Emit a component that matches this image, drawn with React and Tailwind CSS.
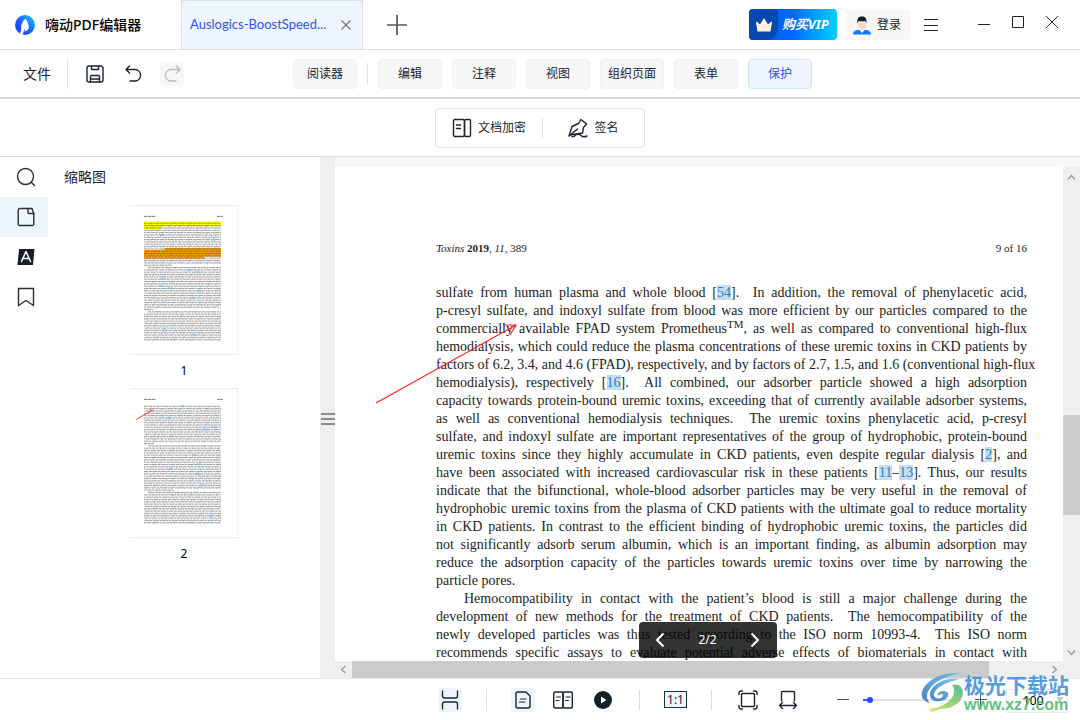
import { useState } from "react";

const menus = ["编辑", "注释", "视图", "组织页面", "表单", "保护"];

const firstParagraph = [
    "sulfate from human plasma and whole blood [54].\u00a0 In addition, the removal of phenylacetic acid,",
    "p-cresyl sulfate, and indoxyl sulfate from blood was more efficient by our particles compared to the",
    "commercially available FPAD system Prometheus^TM^, as well as compared to conventional high-flux",
    "hemodialysis, which could reduce the plasma concentrations of these uremic toxins in CKD patients by",
    "factors of 6.2, 3.4, and 4.6 (FPAD), respectively, and by factors of 2.7, 1.5, and 1.6 (conventional high-flux",
    "hemodialysis), respectively [16].\u00a0 All combined, our adsorber particle showed a high adsorption",
    "capacity towards protein-bound uremic toxins, exceeding that of currently available adsorber systems,",
    "as well as conventional hemodialysis techniques.\u00a0 The uremic toxins phenylacetic acid, p-cresyl",
    "sulfate, and indoxyl sulfate are important representatives of the group of hydrophobic, protein-bound",
    "uremic toxins since they highly accumulate in CKD patients, even despite regular dialysis [2], and",
    "have been associated with increased cardiovascular risk in these patients [11–13]. Thus, our results",
    "indicate that the bifunctional, whole-blood adsorber particles may be very useful in the removal of",
    "hydrophobic uremic toxins from the plasma of CKD patients with the ultimate goal to reduce mortality",
    "in CKD patients. In contrast to the efficient binding of hydrophobic uremic toxins, the particles did",
    "not significantly adsorb serum albumin, which is an important finding, as albumin adsorption may",
    "reduce the adsorption capacity of the particles towards uremic toxins over time by narrowing the",
];

const secondParagraph = [
    "Hemocompatibility in contact with the patient’s blood is still a major challenge during the",
    "development of new methods for the treatment of CKD patients.\u00a0 The hemocompatibility of the",
    "newly developed particles was thus tested according to the ISO norm 10993-4.\u00a0 This ISO norm",
    "recommends specific assays to evaluate potential adverse effects of biomaterials in contact with",
];

const Icon = ({ size = 20, children, className = "" }) => (
    <svg
        width={size}
        height={size}
        viewBox="0 0 20 20"
        fill="none"
        stroke="currentColor"
        strokeWidth="1.4"
        strokeLinecap="round"
        strokeLinejoin="round"
        aria-hidden="true"
        className={`shrink-0 ${className}`}
    >
        {children}
    </svg>
);

const Cite = ({ children }) => (
    <a href="#refs" className="bg-[#c4deef] text-[#1f83c4]">{children}</a>
);

// Turns [12], [11–13] and ^TM^ into links and superscripts
const renderLine = (line) =>
    line.split(/(\[[\d–]+\]|\^TM\^)/).map((part, i) => {
        if (part === "^TM^") {
            return <sup key={i} className="text-[11px] leading-none">TM</sup>;
        }
        if (/^\[[\d–]+\]$/.test(part)) {
            const [from, to] = part.slice(1, -1).split("–");
            return (
                <span key={i}>
                    [<Cite>{from}</Cite>{to && <>–<Cite>{to}</Cite></>}]
                </span>
            );
        }
        return part;
    });

const Line = ({ children, indent }) => (
    <div className={`whitespace-nowrap text-justify [text-align-last:justify] ${indent ? "pl-7" : ""}`}>
        {renderLine(children)}
    </div>
);

const dashes = ["3 .7 5 .6 2 .7 4 .5", "5 .6 2 .6 6 .7 3 .6", "2 .6 4 .7 3 .5 7 .6"];

// shorts: line index -> length of the last line of a paragraph, indents: first lines
const Thumbnail = ({ shorts, indents, marks, cites, arrow }) => (
    <svg width="108" height="150" viewBox="0 0 108 150" className="border border-[#ececec] border-l-0 bg-white" aria-hidden="true">
        <path d="M14 10.500h12M88 10.500h6" stroke="#666" strokeWidth=".9" strokeDasharray="3 .5 4 .5" />
        {marks}
        {Array.from({ length: 51 }, (_, i) => {
            const start = indents.includes(i) ? 18 : 14;
            const end = shorts[i] ? 14 + shorts[i] : 92;
            const y = 17.5 + i * 2.36;
            return (
                <g key={i}>
                    <path d={`M${start} ${y}H${end}`} stroke="#333" strokeOpacity=".5" strokeWidth=".9" strokeDasharray={dashes[i % 3]} strokeDashoffset={i * 3} />
                    <path d={`M${start} ${y + 0.8}H${end}`} stroke="#333" strokeOpacity=".3" strokeWidth=".8" strokeDasharray="1.500 2.500 .8 1.700" strokeDashoffset={i * 2} />
                </g>
            );
        })}
        {cites.map(([x, row]) => (
            <path key={`${x}-${row}`} d={`M${x} ${17.5 + row * 2.36}h4`} stroke="#8cc3e6" strokeWidth="1.800" />
        ))}
        {arrow && <path d="M6 31 22 21.500M20 21.500h3" stroke="#f33" strokeWidth="1" />}
    </svg>
);

const TitleBar = () => (
    <header className="flex h-[50px] shrink-0 items-center border-b border-[#dedede]">
        <div className="flex w-[181px] shrink-0 items-center gap-2.5 pl-[15px]">
            <svg width="20" height="20" viewBox="0 0 20 20" aria-hidden="true">
                <defs>
                    <linearGradient id="logo" x1="0" y1="1" x2="1" y2="0">
                        <stop offset="0" stopColor="#1732ff" />
                        <stop offset=".5" stopColor="#1c64ff" />
                        <stop offset="1" stopColor="#25d4ff" />
                    </linearGradient>
                </defs>
                <circle cx="10" cy="10" r="10" fill="url(#logo)" />
                <path d="M10.500 3.500C7 7 5.800 10.500 6.200 13c.2 1.600-.4 3.600-1.200 5.600l3 1c.2-2 .8-4 2-6 0 1.200-.3 2-.6 3 3-.4 4.500-2 4.400-4.600C13.700 9 12 6 10.500 3.500Z" fill="#fff" />
            </svg>
            <h1 className="whitespace-nowrap text-sm font-medium text-black">嗨动PDF编辑器</h1>
        </div>
        <div className="flex h-full w-[182px] shrink-0 items-center justify-between border border-b-0 border-[#dcdfe6] bg-[#eef5ff] pr-2.5 pl-2">
            <span className="whitespace-nowrap font-['Lato',sans-serif] text-[13px] text-[#2f54eb]">Auslogics-BoostSpeed...</span>
            <button aria-label="关闭标签" className="text-[#777]">
                <svg width="12" height="12" viewBox="0 0 12 12" stroke="currentColor" strokeWidth="1.200"><path d="m1.500 1.500 9 9m0-9-9 9" /></svg>
            </button>
        </div>
        <button aria-label="新建标签" className="ml-6 text-[#555]">
            <svg width="20" height="20" viewBox="0 0 20 20" stroke="currentColor" strokeWidth="1.700"><path d="M10 0v20M0 10h20" /></svg>
        </button>

        <div className="ml-auto flex items-center pr-[22px]">
            <button className="flex h-[31px] w-[88px] items-center overflow-hidden rounded bg-linear-to-r from-[#0758d6] via-[#0066ff] to-[#00d0ff]">
                <span className="flex h-full w-[29px] items-center justify-center rounded-br-xl bg-[#0748ae]">
                    <svg width="18" height="14" viewBox="0 0 18 14" aria-hidden="true">
                        <path d="M2.500 13.500 1 4.500c0-1 1-1 1.300-.4L5 6.500 8 1.500c.5-1.200 1.500-1.200 2 0l3 5 2.700-2.400c.6-.6 1.500-.4 1.300.4l-1.500 9Z" fill="#fff3df" />
                    </svg>
                </span>
                <span className="pl-1 whitespace-nowrap text-[13px] font-bold italic text-white">购买VIP</span>
            </button>
            <button className="ml-[10px] flex h-[30px] w-16 items-center gap-1.5 rounded bg-[#f7f7f7] pl-1.5 text-xs text-[#1b2430]">
                <svg width="18" height="20" viewBox="0 0 18 20" aria-hidden="true">
                    <path d="M0 19.500c0-3 2.500-4.500 6-4.700h6c3.500.2 6 1.700 6 4.700Z" fill="#1677ff" />
                    <path d="M6 14.500 9 18l3-3.500-1-2H7Z" fill="#fff" />
                    <path d="M5 6h8v4.500c0 3-1.800 4.500-4 4.500s-4-1.500-4-4.500Z" fill="#fcd9cb" />
                    <path d="M4.500 8.500C4 4 5 1.500 8.500 1.500c3.800-.4 5.500 2 5 7l-1-2.500c-2 .5-5 .3-7 0Z" fill="#14202b" />
                </svg>
                登录
            </button>
            <button aria-label="菜单" className="ml-[13px] text-[#1b2430]">
                <svg width="14" height="12" viewBox="0 0 14 12" stroke="currentColor" strokeWidth="1"><path d="M0 .5h14M0 6.500h14M0 11.500h14" /></svg>
            </button>
            <button aria-label="最小化" className="ml-10 text-[#222]">
                <svg width="12" height="12" viewBox="0 0 12 12" stroke="currentColor"><path d="M0 5.500h12" /></svg>
            </button>
            <button aria-label="最大化" className="mb-1.5 ml-[22px] text-[#222]">
                <svg width="12" height="12" viewBox="0 0 12 12" fill="none" stroke="currentColor"><path d="M.5.500h11v11H.500z" /></svg>
            </button>
            <button aria-label="关闭" className="mb-1.5 ml-[22px] text-[#222]">
                <svg width="12" height="12" viewBox="0 0 12 12" stroke="currentColor"><path d="m0 0 12 12M12 0 0 12" /></svg>
            </button>
        </div>
    </header>
);

const Toolbar = () => (
    <nav className="flex h-12 shrink-0 items-center border-b border-[#cfcfcf] pt-px pl-[23px] text-[#1b2430]">
        <button className="whitespace-nowrap text-sm">文件</button>
        <div className="ml-4 h-[30px] w-px bg-[#e2e2e2]" />
        <button aria-label="保存" className="ml-[17px]">
            <Icon>
                <path d="M4 2h12.500L18 3.500V16a2 2 0 0 1-2 2H4a2 2 0 0 1-2-2V4a2 2 0 0 1 2-2Z" />
                <path d="M6.500 2v3.500h7V2M5.500 18v-5.500a1 1 0 0 1 1-1h7a1 1 0 0 1 1 1V18M5.500 15h9" />
            </Icon>
        </button>
        <button aria-label="撤销" className="ml-[19px]">
            <Icon><path d="M5.500 2 2 5.500 5.500 9M2 5.500h9.500a5.800 5.800 0 0 1 0 11.500H6" /></Icon>
        </button>
        <button aria-label="重做" disabled className="ml-4 flex size-6 items-center justify-center rounded-sm bg-[#f7f7f7] text-[#bbb]">
            <Icon><path d="M14.500 2 18 5.500 14.500 9M18 5.500H8.500a5.800 5.800 0 0 0 0 11.500H14" /></Icon>
        </button>

        <div className="ml-[109px] flex items-center gap-2.5 text-xs">
            <button className="h-[30px] w-16 rounded border border-[#f1f1f1] bg-[#f7f7f7]">阅读器</button>
            <div className="h-[22px] w-px bg-[#e2e2e2]" />
            {menus.map((menu) => (
                <button
                    key={menu}
                    className={`h-[30px] w-16 whitespace-nowrap rounded border ${menu === "保护"
                        ? "border-[#cfe3fb] bg-[#eef5ff] text-[#2f54eb]"
                        : "border-[#f1f1f1] bg-[#f7f7f7]"}`}
                >
                    {menu}
                </button>
            ))}
        </div>
    </nav>
);

const ProtectBar = () => (
    <div className="flex h-[59px] shrink-0 items-center justify-center border-y border-t-[#e4e4e4] border-b-[#dedede]">
        <div className="flex h-10 w-[210px] items-center rounded border border-[#e2e2e2] text-xs text-[#1b2430]">
            <button className="flex w-[106px] items-center justify-center gap-1.5">
                <Icon>
                    <rect x="1.500" y="1.500" width="11" height="17" rx="1.500" />
                    <rect x="12.500" y="1.500" width="6" height="17" rx="1.500" />
                    <path d="M4.500 7h4M4.500 10.500h4" />
                </Icon>
                文档加密
            </button>
            <div className="h-5 w-px bg-[#dcdcdc]" />
            <button className="flex flex-1 items-center justify-center gap-1.5">
                <Icon>
                    <path d="M1 18 4 8.500 10.500 5.500 13 1.500 18.500 6l-3 3.500-1 5.500L1.500 17" />
                    <path d="m1.500 17.500 8-6.500M4 18.500h2c2-2.500 5-3 7-1 1.500 1.500 4 1.500 6 .5" />
                </Icon>
                签名
            </button>
        </div>
    </div>
);

const SideRail = () => (
    <div className="flex w-12 shrink-0 flex-col text-[#2b2f33]">
        <button aria-label="搜索" className="flex h-10 items-center justify-center pl-1">
            <Icon><circle cx="9.500" cy="9.500" r="8" /><path d="m15.500 15.500 3 3" /></Icon>
        </button>
        <button aria-label="缩略图" className="flex h-10 items-center justify-center bg-[#eef5ff] pl-1">
            <Icon>
                <path d="M12 1.500H4a1.800 1.800 0 0 0-1.800 1.800v13.400A1.800 1.800 0 0 0 4 18.500h12a1.800 1.800 0 0 0 1.800-1.800V6.500L16 1.500Z" />
                <path d="M12 1.500v4a1 1 0 0 0 1 1h4.800" />
            </Icon>
        </button>
        <button aria-label="批注" className="flex h-10 items-center justify-center pl-1">
            <Icon>
                <path d="M3 2h15.500L17 18H1.500Z" fill="#15202b" stroke="none" />
                <path d="M5.500 14.500 10 4.500l4.500 10M7 11.500h6" stroke="#fff" strokeWidth="1.500" />
            </Icon>
        </button>
        <button aria-label="书签" className="flex h-10 items-center justify-center pl-1">
            <Icon><path d="M2.500 1.500h15v17L10 13.500l-7.500 5Z" strokeLinejoin="miter" /></Icon>
        </button>
    </div>
);

const ThumbPanel = () => (
    <aside className="flex w-[272px] shrink-0 flex-col">
        <h2 className="h-12 pl-4 text-sm leading-10 text-[#23233f]">缩略图</h2>
        <div className="flex flex-col items-center text-xs text-black">
            <button className="flex h-[183px] flex-col items-center gap-2">
                <Thumbnail
                    indents={[19, 38]}
                    shorts={{ 18: 28, 37: 9 }}
                    cites={[[30, 5], [82, 7], [58, 20], [66, 21], [32, 24], [29, 27], [38, 28], [68, 29], [62, 32], [33, 46], [63, 48]]}
                    marks={
                        <>
                            <path d="M14 15.500h78v5H32v3H14Z" fill="#ffff1a" />
                            <path d="M35 42.500h57v9H75v2H14v-9h21Z" fill="#ffa01a" />
                        </>
                    }
                />
                1
            </button>
            <button className="flex h-[183px] flex-col items-center gap-2">
                <Thumbnail
                    indents={[17, 37]}
                    shorts={{ 16: 10, 36: 30 }}
                    cites={[[51, 0], [37, 5], [83, 9], [74, 10], [63, 21], [68, 25], [39, 27], [66, 29], [71, 34], [80, 47]]}
                    arrow
                />
                2
            </button>
        </div>
    </aside>
);

const Chevron = ({ d }) => (
    <svg width="9" height="9" viewBox="0 0 9 9" fill="none" stroke="#999" strokeWidth="1.300" aria-hidden="true"><path d={d} /></svg>
);

const Viewer = () => (
    <main className="relative flex min-w-0 flex-1 flex-col bg-[#f7f7f7] pt-2.5">
        <div className="flex min-h-0 flex-1">
            <article className="relative min-w-0 flex-1 overflow-hidden bg-white pt-[72px] pr-9 pl-[101px] font-['Liberation_Serif',serif] text-sm leading-[18px] text-[#1c1c1c]">
                <div className="mb-[27px] flex justify-between text-[11px]">
                    <span><i>Toxins</i> <b>2019</b>, <i>11</i>, 389</span>
                    <span>9 of 16</span>
                </div>
                {firstParagraph.map((line) => <Line key={line}>{line}</Line>)}
                <div>particle pores.</div>
                {secondParagraph.map((line, i) => <Line key={line} indent={i === 0}>{line}</Line>)}
                <svg width="146" height="84" viewBox="0 0 146 84" fill="none" stroke="#ff2020" strokeWidth="1.200" className="absolute top-[155px] left-10" aria-hidden="true">
                    <path d="m1 81 140-78M128 3h13l-6 10" />
                </svg>
            </article>
            <div className="flex w-[17px] shrink-0 flex-col items-center bg-[#efefef] pt-1.5 pb-1">
                <Chevron d="m1 6.500 3.500-4L8 6.500" />
                <div className="mt-[233px] h-[100px] w-full bg-[#cdcdcd]" />
                <div className="mt-auto"><Chevron d="m1 2.500 3.500 4 3.500-4" /></div>
            </div>
        </div>
        <div className="flex h-[17px] shrink-0 items-center bg-[#efefef] pr-[21px] pl-1">
            <Chevron d="M6.500 1 2.500 4.500l4 3.500" />
            <div className="ml-1 h-full w-[637px] bg-[#cbcbcb]" />
            <div className="ml-auto"><Chevron d="m2.500 1 4 3.500-4 3.500" /></div>
        </div>

        <div className="absolute bottom-5 left-1/2 flex h-9 w-[138px] -translate-x-1/2 items-center justify-between rounded bg-black/80 px-4 text-xs text-white">
            <button aria-label="上一页">
                <svg width="10" height="16" viewBox="0 0 10 16" fill="none" stroke="currentColor" strokeWidth="2"><path d="M8.500 1.500 2 8l6.500 6.500" /></svg>
            </button>
            2/2
            <button aria-label="下一页">
                <svg width="10" height="16" viewBox="0 0 10 16" fill="none" stroke="currentColor" strokeWidth="2"><path d="M1.500 1.500 8 8l-6.500 6.500" /></svg>
            </button>
        </div>
    </main>
);

const FooterButton = ({ label, active, children }) => (
    <button aria-label={label} className={`flex size-6 shrink-0 items-center justify-center rounded ${active ? "bg-[#eef5ff]" : ""}`}>
        {children}
    </button>
);

const Divider = () => <div className="h-5 w-px shrink-0 bg-[#dcdcdc]" />;

const StatusBar = () => {
    const [zoom, setZoom] = useState(100);

    return (
        <footer className="flex h-[42px] shrink-0 items-center justify-end border-t border-[#e8e8e8] pr-3 text-[#1b2430]">
            <div className="flex items-center gap-6">
                <FooterButton label="连续滚动" active>
                    <Icon><path d="M2.500 1v5a2 2 0 0 0 2 2h11a2 2 0 0 0 2-2V1M2.500 19v-5a2 2 0 0 1 2-2h11a2 2 0 0 1 2 2v5" /></Icon>
                </FooterButton>
                <Divider />
                <div className="flex items-center gap-4">
                    <FooterButton label="单页" active>
                        <Icon>
                            <path d="M5 2h8l4 4v10a2 2 0 0 1-2 2H5a2 2 0 0 1-2-2V4a2 2 0 0 1 2-2Z" />
                            <path d="M7.500 9h5.500M6.500 12h5.500" strokeWidth="1.200" />
                        </Icon>
                    </FooterButton>
                    <FooterButton label="双页">
                        <Icon>
                            <rect x=".7" y="2" width="9.300" height="16" rx="1.500" />
                            <rect x="10" y="2" width="9.300" height="16" rx="1.500" />
                            <path d="M3.500 7h4M3 10.500h3M13 7h4M12.500 10.500h3" strokeWidth="1.200" />
                        </Icon>
                    </FooterButton>
                    <FooterButton label="播放">
                        <Icon><circle cx="10" cy="10" r="9" fill="#15202b" stroke="none" /><path d="M8 6.500v7l5.500-3.500Z" fill="#fff" stroke="none" /></Icon>
                    </FooterButton>
                </div>
                <Divider />
                <button aria-label="实际大小" className="h-[17px] w-[23px] border border-[#1b2f4a] bg-[#eef5ff] text-xs leading-[15px]">1:1</button>
                <Divider />
                <div className="flex items-center gap-4">
                    <FooterButton label="适合页面">
                        <Icon>
                            <rect x="3.500" y="3.500" width="13" height="13" rx="1" />
                            <path d="M1 4.500V3a2 2 0 0 1 2-2h1.500M15.500 1H17a2 2 0 0 1 2 2v1.500M19 15.500V17a2 2 0 0 1-2 2h-1.500M4.500 19H3a2 2 0 0 1-2-2v-1.500" />
                        </Icon>
                    </FooterButton>
                    <FooterButton label="适合宽度">
                        <Icon><path d="M3.500 11V2.500a1 1 0 0 1 1-1h11a1 1 0 0 1 1 1V11M1.500 15.500h17M4.500 12.500l-3 3 3 3M15.500 12.500l3 3-3 3" /></Icon>
                    </FooterButton>
                </div>
            </div>
            <button aria-label="缩小" className="ml-[37px] text-[#555]">
                <svg width="12" height="12" viewBox="0 0 12 12" stroke="currentColor"><path d="M0 5.500h12" /></svg>
            </button>
            <input
                type="range"
                aria-label="缩放"
                min="50"
                max="1200"
                value={zoom}
                onChange={(e) => setZoom(Number(e.target.value))}
                className="ml-3.5 h-0.5 w-[98px] appearance-none bg-[linear-gradient(to_right,#2b5cff_8px,#e3e3ea_8px)] [&::-webkit-slider-thumb]:size-1.5 [&::-webkit-slider-thumb]:appearance-none [&::-webkit-slider-thumb]:rounded-full [&::-webkit-slider-thumb]:bg-[#1f4dff]"
            />
            <button aria-label="放大" className="ml-3.5 text-[#555]">
                <svg width="12" height="12" viewBox="0 0 12 12" stroke="currentColor"><path d="M0 5.500h12M5.500 0v12" /></svg>
            </button>
            <div className="relative ml-[19px]">
                <select
                    aria-label="缩放比例"
                    value={zoom}
                    onChange={(e) => setZoom(Number(e.target.value))}
                    className="h-6 w-[62px] appearance-none border border-[#ebebeb] pl-4 text-xs text-black"
                >
                    <option value={zoom}>{zoom}</option>
                </select>
                <svg width="8" height="5" viewBox="0 0 8 5" className="pointer-events-none absolute top-2.5 right-1" aria-hidden="true"><path d="M0 0h8L4 5Z" fill="#ccc" /></svg>
            </div>
        </footer>
    );
};

const Watermark = () => (
    <div className="pointer-events-none absolute right-[11px] bottom-1.5 flex items-center opacity-85">
        <svg width="43" height="42" viewBox="0 0 43 42" aria-hidden="true">
            <defs>
                <linearGradient id="swirlBlue" x1="0" y1="1" x2="1" y2="0">
                    <stop offset="0" stopColor="#2e6fbe" />
                    <stop offset="1" stopColor="#63bdf0" />
                </linearGradient>
                <linearGradient id="swirlGreen" x1="0" y1="1" x2="1" y2="0">
                    <stop offset="0" stopColor="#f2e645" />
                    <stop offset=".45" stopColor="#8fce62" />
                    <stop offset="1" stopColor="#3fae86" />
                </linearGradient>
            </defs>
            <path d="M41 1C27 0 12 4 4 14-2 22 0 29 9 31 4 26 5 20 12 13 20 6 30 3 41 1Z" fill="url(#swirlBlue)" />
            <path d="M38 7C24 5 11 12 9 21c-1 8 7 10 14 7 6-3 6-9-1-9-4 0-6 3-5 5 1-2 5-3 5-1 0 3-4 4-7 3-4-2-2-8 5-12 6-4 12-5 18-7Z" fill="url(#swirlBlue)" />
            <path d="M31 13c5-2 11 1 11 8-1 10-11 16-23 16-4 1-7 3-9 4 1-2 0-3-5-4 10 0 20-4 25-10 4-5 4-10 1-14Z" fill="url(#swirlGreen)" />
        </svg>
        <div className="flex flex-col whitespace-nowrap font-bold">
            <span className="text-[21px] leading-6 text-[#3d8bd6]">极光下载站</span>
            <span className="font-['Liberation_Sans',sans-serif] text-base leading-4 text-[#45b96a]">www.xz7.com</span>
        </div>
    </div>
);

export default function App() {
    return (
        <div className="relative flex h-screen flex-col overflow-hidden bg-white font-['Noto_Sans','Noto_Sans_CJK_SC',sans-serif]">
            <TitleBar />
            <Toolbar />
            <ProtectBar />
            <div className="flex min-h-0 flex-1">
                <SideRail />
                <ThumbPanel />
                {/* Draggable splitter */}
                <div className="flex w-[15px] shrink-0 flex-col items-end justify-center gap-[3px] bg-[#efefef] pt-0.5">
                    <div className="h-0.5 w-3.5 bg-[#8b8b8b]" />
                    <div className="h-0.5 w-3.5 bg-[#8b8b8b]" />
                    <div className="h-0.5 w-3.5 bg-[#8b8b8b]" />
                </div>
                <Viewer />
            </div>
            <StatusBar />
            <Watermark />
        </div>
    );
}
